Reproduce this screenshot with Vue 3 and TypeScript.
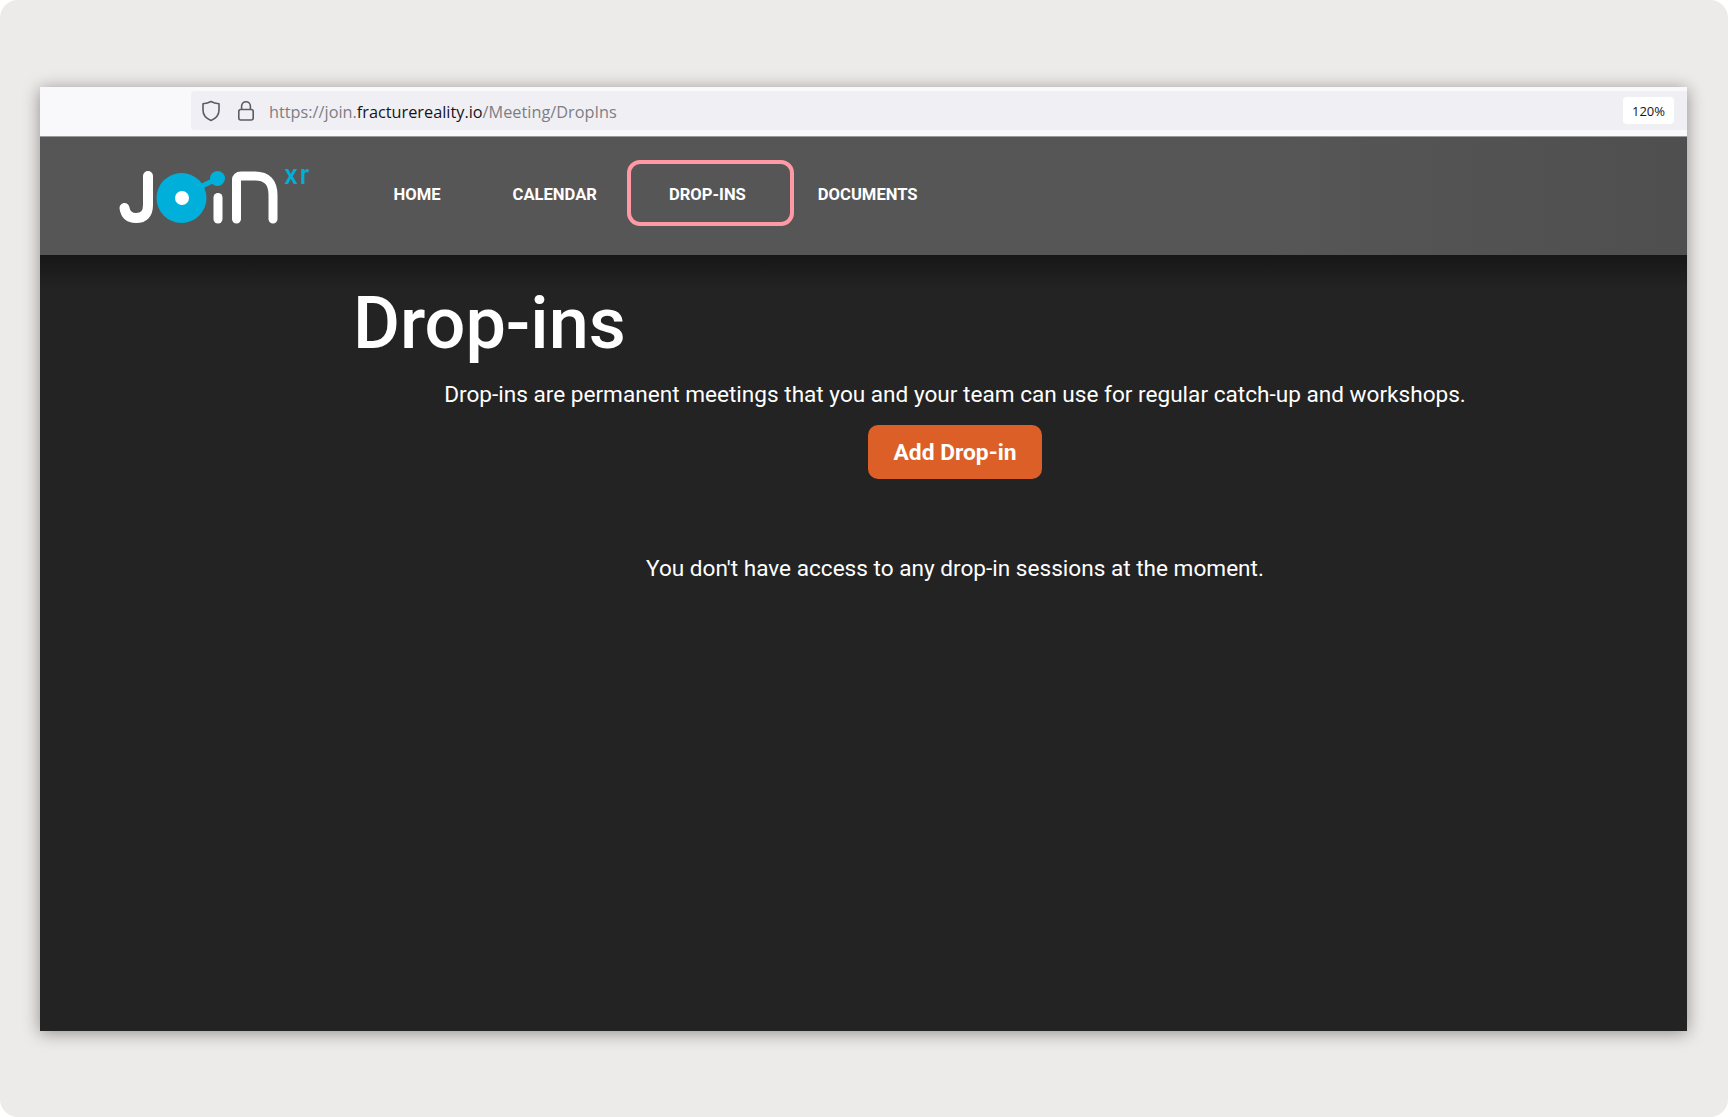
<script setup lang="ts">
const navItems = [
  { label: 'HOME', active: false },
  { label: 'CALENDAR', active: false },
  { label: 'DROP-INS', active: true },
  { label: 'DOCUMENTS', active: false }
]
</script>

<template>
  <div class="page">
    <div class="window">
      <div class="toolbar">
        <div class="urlbar">
          <svg class="url-icon" viewBox="0 0 20 22" fill="none" stroke="#5b5b66" stroke-width="1.6">
            <path d="M10 1.5 C7.5 3 4.5 3.6 2 3.8 V10 C2 15 5.5 18.6 10 20.5 C14.5 18.6 18 15 18 10 V3.8 C15.5 3.6 12.5 3 10 1.5 Z" stroke-linejoin="round" />
          </svg>
          <svg class="url-icon lock" viewBox="0 0 18 22" fill="none" stroke="#5b5b66" stroke-width="1.6">
            <rect x="1.8" y="9.5" width="14.4" height="10.5" rx="2" />
            <path d="M4.6 9.5 V6.2 C4.6 3.6 6.5 1.8 9 1.8 C11.5 1.8 13.4 3.6 13.4 6.2 V9.5" />
          </svg>
          <span class="url">https://join.<b>fracturereality.io</b>/Meeting/DropIns</span>
          <span class="zoom">120%</span>
        </div>
      </div>

      <header class="navbar">
        <svg class="logo" viewBox="0 0 220 90" fill="none">
          <path d="M48 26 V55 Q48 68 36 68 Q26 68 24.5 58" stroke="#fff" stroke-width="10" stroke-linecap="round" />
          <circle cx="81.5" cy="48" r="25" fill="#00b0db" />
          <circle cx="82" cy="48" r="7" fill="#fff" />
          <path d="M98 38 L117.5 28.5" stroke="#00b0db" stroke-width="5" />
          <circle cx="117.5" cy="28.5" r="7.5" fill="#00b0db" />
          <path d="M118 47.5 V69" stroke="#fff" stroke-width="9" stroke-linecap="round" />
          <path d="M136.5 69 V30 Q136.5 26 141 26 H155 Q173 26 173 45 V69" stroke="#fff" stroke-width="9" stroke-linecap="round" />
          <text x="184" y="34" class="logo-xr">xr</text>
        </svg>
        <nav class="nav">
          <a v-for="item in navItems" :key="item.label" class="nav-item">
            {{ item.label }}
            <span v-if="item.active" class="nav-highlight"></span>
          </a>
        </nav>
      </header>

      <main class="content">
        <h1 class="title">Drop-ins</h1>
        <p class="intro">Drop-ins are permanent meetings that you and your team can use for regular catch-up and workshops.</p>
        <button class="add-btn">Add Drop-in</button>
        <p class="empty">You don't have access to any drop-in sessions at the moment.</p>
      </main>
    </div>
  </div>
</template>

<style>
html,
body {
  background: #fff;
}
</style>

<style scoped>
.page {
  height: 1117px;
  box-sizing: border-box;
  padding: 87px 41px 86px 40px;
  background: #ecebe9;
  border-radius: 18px;
  overflow: hidden;
  font-family: Roboto, "Liberation Sans", sans-serif;
}

.window {
  height: 100%;
  display: flex;
  flex-direction: column;
  box-shadow: 0 2px 16px rgba(0, 0, 0, 0.4);
}

.toolbar {
  height: 50px;
  box-sizing: border-box;
  padding: 4px 0 6px 151px;
  background: #f9f9fb;
  border-bottom: 1px solid #9a9a9a;
}

.urlbar {
  height: 39px;
  display: flex;
  align-items: center;
  padding: 0 13px 0 10px;
  background: #f0f0f4;
  border-radius: 4px 0 0 4px;
  font-family: "Open Sans", "Liberation Sans", sans-serif;
}

.url-icon {
  width: 20px;
  height: 22px;
  flex: none;
}

.url-icon.lock {
  width: 18px;
  margin-left: 16px;
}

.url {
  margin-left: 14px;
  margin-top: 2px;
  font-size: 16.3px;
  color: #7d7d85;
}

.url b {
  font-weight: 400;
  color: #15141a;
}

.zoom {
  margin-left: auto;
  width: 51px;
  height: 27px;
  display: flex;
  align-items: center;
  justify-content: center;
  background: #fff;
  border-radius: 4px;
  font-size: 13px;
  color: #15141a;
}

.navbar {
  height: 118px;
  flex: none;
  display: flex;
  align-items: center;
  padding-left: 60px;
  background: linear-gradient(90deg, #565656 0%, #565656 75%, #4f4f4f 100%);
}

.logo {
  width: 220px;
  height: 90px;
  flex: none;
  margin-top: -2px;
  filter: blur(0.4px);
}

.logo-xr {
  font-family: Roboto, sans-serif;
  font-size: 27px;
  font-weight: 500;
  letter-spacing: 2px;
  fill: #00b0db;
}

.nav {
  display: flex;
  margin-left: 37.5px;
  margin-top: -3px;
}

.nav-item {
  position: relative;
  padding: 0 36px;
  font-size: 16.6px;
  line-height: 24px;
  font-weight: 700;
  color: #fff;
}

.nav-highlight {
  position: absolute;
  left: -6px;
  right: -12px;
  top: -23px;
  bottom: -19px;
  border: 4px solid #ff99a5;
  border-radius: 13px;
}

.content {
  flex: 1;
  display: flex;
  flex-direction: column;
  align-items: center;
  padding: 26px 126px 0 309px;
  background: linear-gradient(180deg, #171717 0, #232323 34px);
  color: #fff;
}

.title {
  align-self: flex-start;
  margin: 0 0 0 4px;
  font-size: 72px;
  line-height: 86px;
  font-weight: 500;
}

.intro {
  margin: 14px 0 0;
  font-size: 22.6px;
  line-height: 28px;
  white-space: nowrap;
}

.add-btn {
  margin-top: 16px;
  width: 174px;
  height: 54px;
  border: none;
  border-radius: 10px;
  background: #db5f26;
  color: #fff;
  font-family: inherit;
  font-size: 22.8px;
  font-weight: 700;
}

.empty {
  margin: 76px 0 0;
  font-size: 22.6px;
  line-height: 28px;
}
</style>
